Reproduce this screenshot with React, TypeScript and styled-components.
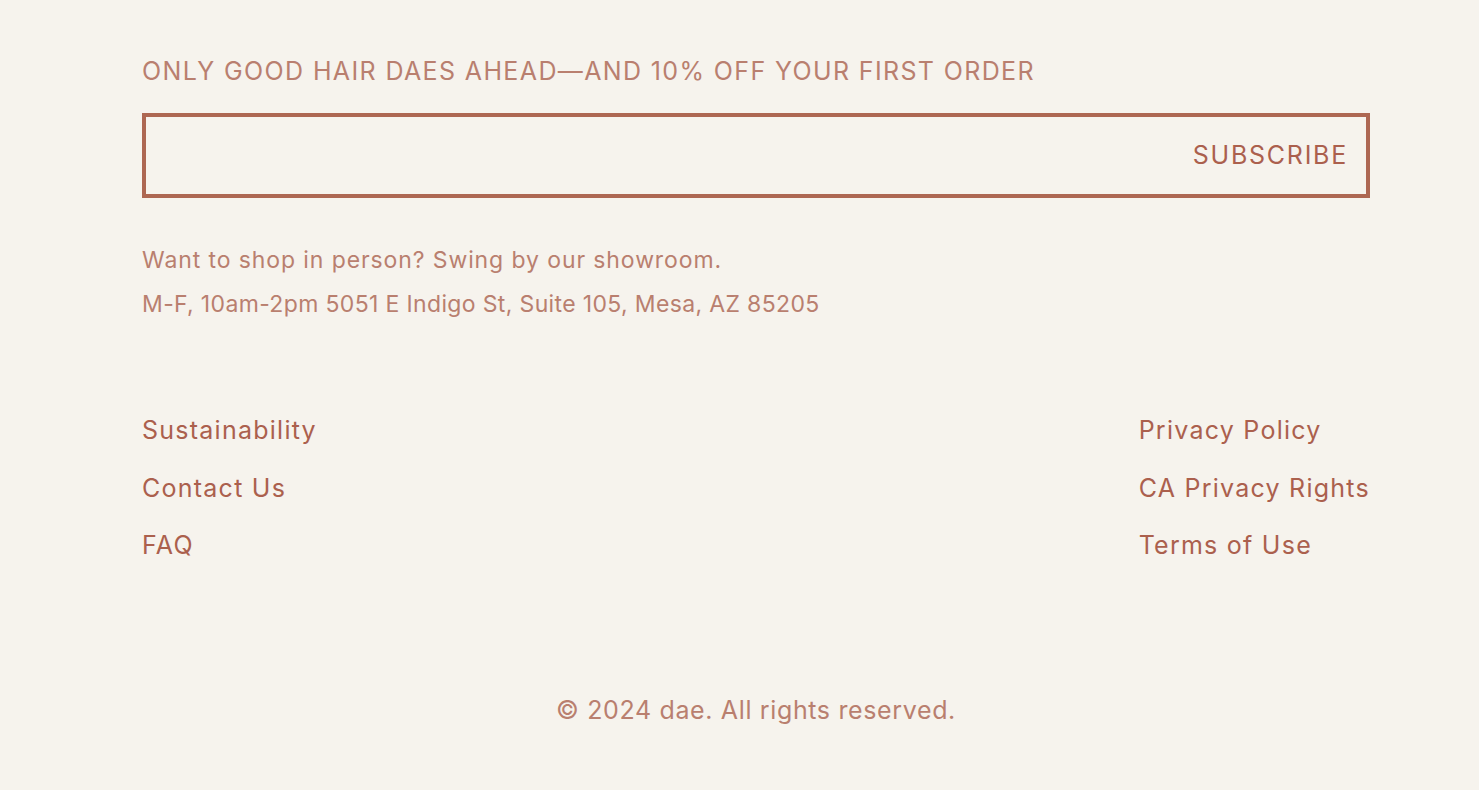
import React from "react";
import styled, { createGlobalStyle } from "styled-components";

const Global = createGlobalStyle`
  html, body {
    margin: 0;
    padding: 0;
    background: #f6f3ed;
  }
  body {
    font-family: Inter, "Open Sans", "Noto Sans", sans-serif;
    min-height: 790px;
  }
`;

const Footer = styled.footer`
  background: #f6f3ed;
  padding: 56px 109px 60px 142px;
  display: flex;
  flex-direction: column;
  min-height: 790px;
  box-sizing: border-box;
`;

const Heading = styled.h2`
  margin: 0;
  font-size: 25px;
  line-height: 30px;
  font-weight: 400;
  letter-spacing: 1.37px;
  color: #b97f6f;
  text-transform: uppercase;
`;

const Form = styled.form`
  margin-top: 27px;
  height: 85px;
  box-sizing: border-box;
  border: 4px solid #ad6752;
  display: flex;
  align-items: center;
`;

const EmailInput = styled.input`
  flex: 1;
  height: 100%;
  border: none;
  background: transparent;
  outline: none;
  padding: 0 20px;
  font: inherit;
  font-size: 24px;
  color: #ab604d;
`;

const SubscribeButton = styled.button`
  border: none;
  background: transparent;
  padding: 0 18px 2px 0;
  height: 100%;
  font-family: inherit;
  font-size: 25px;
  font-weight: 400;
  letter-spacing: 1.75px;
  color: #ab604d;
  cursor: pointer;
  text-transform: uppercase;
`;

const Showroom = styled.div`
  margin-top: 40px;
`;

const InfoLine = styled.p<{ $spacing: number }>`
  margin: 0;
  font-size: 23px;
  line-height: 44px;
  letter-spacing: ${(p) => p.$spacing}px;
  color: #b97f6f;
`;

const LinksRow = styled.nav`
  margin-top: 76px;
  display: flex;
  justify-content: space-between;
  align-items: flex-start;
`;

const LinkList = styled.ul`
  list-style: none;
  margin: 0;
  padding: 0;
  display: flex;
  flex-direction: column;
`;

const LinkItem = styled.li`
  font-size: 25px;
  line-height: 57.5px;
`;

const FooterLink = styled.a`
  color: #ab604d;
  text-decoration: none;
  letter-spacing: 1.25px;
`;

const Copyright = styled.p`
  margin: 120px 0 0;
  text-align: center;
  font-size: 25px;
  line-height: 30px;
  letter-spacing: 0.64px;
  color: #b97f6f;
`;

const leftLinks = ["Sustainability", "Contact Us", "FAQ"];
const rightLinks = ["Privacy Policy", "CA Privacy Rights", "Terms of Use"];

export default function App() {
  return (
    <>
      <Global />
      <Footer>
        <Heading>Only good hair daes ahead—and 10% off your first order</Heading>
        <Form onSubmit={(e) => e.preventDefault()}>
          <EmailInput type="email" aria-label="Email" />
          <SubscribeButton type="submit">Subscribe</SubscribeButton>
        </Form>
        <Showroom>
          <InfoLine $spacing={0.9}>Want to shop in person? Swing by our showroom.</InfoLine>
          <InfoLine $spacing={0.35}>M-F, 10am-2pm 5051 E Indigo St, Suite 105, Mesa, AZ 85205</InfoLine>
        </Showroom>
        <LinksRow>
          <LinkList>
            {leftLinks.map((l) => (
              <LinkItem key={l}>
                <FooterLink href="#">{l}</FooterLink>
              </LinkItem>
            ))}
          </LinkList>
          <LinkList>
            {rightLinks.map((l) => (
              <LinkItem key={l}>
                <FooterLink href="#">{l}</FooterLink>
              </LinkItem>
            ))}
          </LinkList>
        </LinksRow>
        <Copyright>© 2024 dae. All rights reserved.</Copyright>
      </Footer>
    </>
  );
}
